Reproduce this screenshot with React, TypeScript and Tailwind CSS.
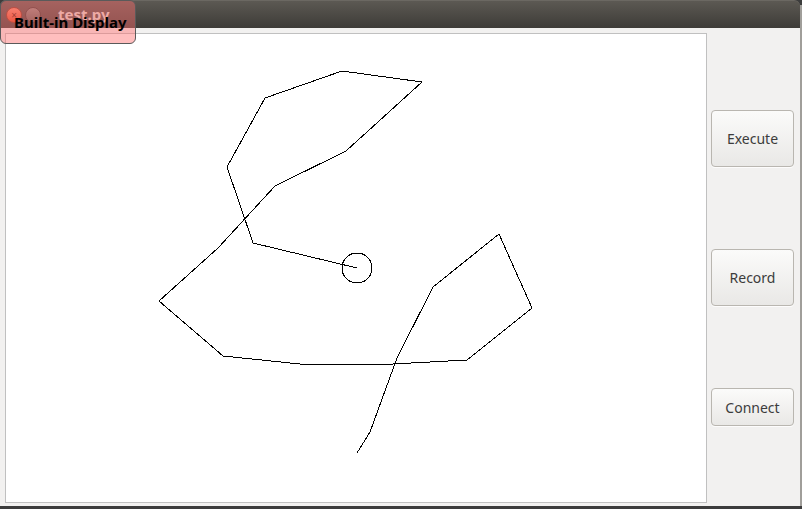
import React from "react";

const pts =
  "357,268 253,243 227,167 265,98 342,71 422,82 346,151 275,186 218,248 159,301 223,356 300,364 393,364 467,360 532,308 499,234 433,287 397,358 370,432 357,453";

export default function App() {
  return (
    <div className="relative w-[802px] h-[509px] overflow-hidden bg-[#3c3c3c] font-['Noto_Sans',sans-serif]">
      <div className="flex w-[802px] h-[506px]">
        <div className="flex flex-col w-[800px] h-[506px]">
          {/* title bar */}
          <div className="h-[28px] rounded-t-[6px] bg-gradient-to-b from-[#5c5953] to-[#3e3c38] border-t border-[#6b6862] flex items-center pl-[6px] gap-[3px]">
            <div className="w-[16px] h-[16px] rounded-full bg-gradient-to-b from-[#f08a6e] to-[#d9441f] border border-[#8a3520] flex items-center justify-center text-[10px] leading-none text-[#5a1a0a]">
              ×
            </div>
            <div className="w-[16px] h-[16px] rounded-full bg-gradient-to-b from-[#8c8a84] to-[#5f5d58] border border-[#3a3935]" />
            <div className="ml-[14px] text-[15px] font-bold text-[#dfdbd2]">test.py</div>
          </div>
          {/* body */}
          <div className="flex-1 flex bg-[#f2f1f0] pl-[5px] pt-[5px] pb-[3px]">
            <div className="w-[702px] h-[470px] border border-[#c0c0c0] bg-white">
              <svg width="700" height="468" viewBox="6 34 700 468" shapeRendering="crispEdges">
                <polyline points={pts} fill="none" stroke="#000" strokeWidth="1" />
                <circle cx="357" cy="268" r="15" fill="none" stroke="#000" strokeWidth="1" />
              </svg>
            </div>
            <div className="flex flex-col ml-[4px]">
              {[
                { label: "Execute", mt: "mt-[77px]", h: "h-[57px]" },
                { label: "Record", mt: "mt-[82px]", h: "h-[57px]" },
                { label: "Connect", mt: "mt-[82px]", h: "h-[38px]" },
              ].map((b) => (
                <div
                  key={b.label}
                  className={`${b.mt} ${b.h} w-[83px] rounded-[4px] border border-[#b9b6b0] bg-gradient-to-b from-[#fbfbfa] to-[#e9e8e6] shadow-[0_1px_0_rgba(255,255,255,0.8)] flex items-center justify-center text-[14px] text-[#3c3c3c]`}
                >
                  {b.label}
                </div>
              ))}
            </div>
          </div>
        </div>
        <div className="w-[2px] mt-[5px] bg-[#a09e9a]" />
      </div>
      {/* overlay label */}
      <div className="absolute left-0 top-0 w-[136px] h-[44px] rounded-[6px] border border-[#5a5a5a] bg-[rgba(255,110,110,0.45)] flex items-center pl-[13px] pt-[1px] text-[15px] font-bold text-black">
        Built-in Display
      </div>
    </div>
  );
}
